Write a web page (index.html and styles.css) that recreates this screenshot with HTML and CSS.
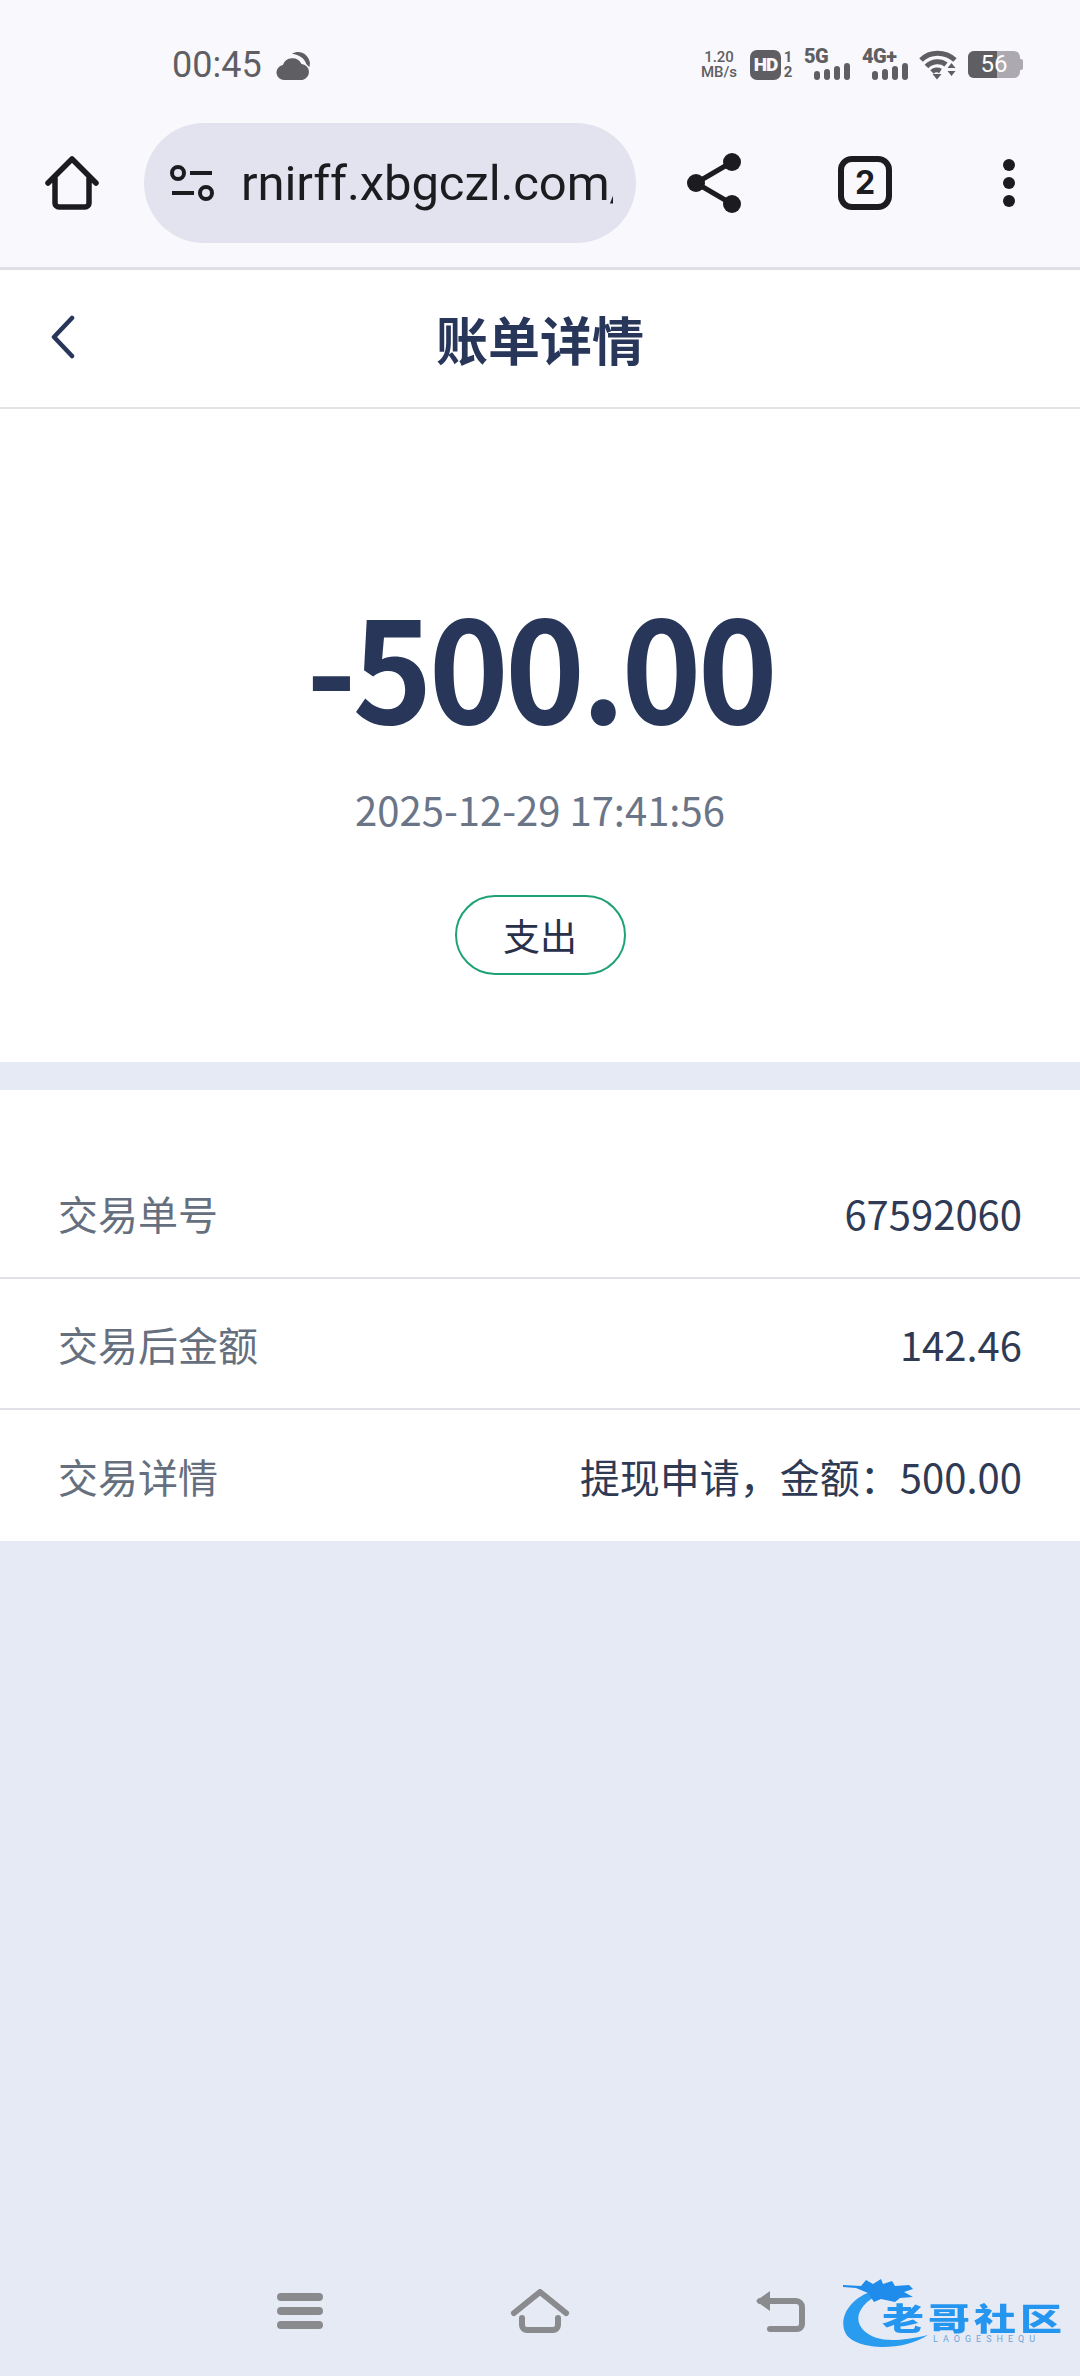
FILE: index.html
```html
<!DOCTYPE html>
<html lang="zh">
<head>
<meta charset="utf-8">
<title>账单详情</title>
<link rel="stylesheet" href="styles.css">
</head>
<body>
<div class="page">
  <div class="chrome">
    <div class="status">
      <div class="status-left">
        <span class="time">00:45</span>
        <svg class="cloud" viewBox="0 0 32 28" width="34" height="30"><path d="M8 28a7 7 0 0 1-1.600-13.900A9.500 9.500 0 0 1 24 13a7.600 7.600 0 0 1 1 15z" fill="#5f5f63"/><path d="M15 3.500C21-.5 30 2 32 12l-.6 4-2.900-3C27 8 22 4.500 15 3.500z" fill="#5f5f63"/></svg>
      </div>
      <div class="status-right">
        <div class="speed"><span>1.20</span><span>MB/s</span></div>
        <div class="hd"><span class="hd-box">HD</span><span class="hd-nums"><span>1</span><span>2</span></span></div>
        <div class="net net-5g"><span class="net-label">5G</span>
          <svg class="bars" viewBox="0 0 36 17" width="36" height="17"><rect x="0" y="8" width="6" height="9" rx="3"/><rect x="10" y="6" width="6" height="11" rx="3"/><rect x="20" y="3" width="6" height="14" rx="3"/><rect x="30" y="0" width="6" height="17" rx="3"/></svg>
        </div>
        <div class="net net-4g"><span class="net-label">4G+</span>
          <svg class="bars" viewBox="0 0 36 17" width="36" height="17"><rect x="0" y="8" width="6" height="9" rx="3"/><rect x="10" y="6" width="6" height="11" rx="3"/><rect x="20" y="3" width="6" height="14" rx="3"/><rect x="30" y="0" width="6" height="17" rx="3"/></svg>
        </div>
        <svg class="wifi" viewBox="0 0 38 30" width="38" height="30"><g fill="none" stroke="#5f5f63" stroke-width="5"><path d="M2 10C11 1 26 1 36 10"/><path d="M7.500 16.500C13 10.500 22 10.500 27 14.500"/><path d="M13 22C15.500 19.500 19 19.500 21.500 21"/></g><path d="M13.500 24h9l-4.500 5.500z" fill="#5f5f63"/><path d="M32.500 13l4 5h-8zM28.500 21h8l-4 5z" fill="#5f5f63"/></svg>
        <div class="battery"><div class="battery-level"></div><span class="battery-num">56</span><span class="battery-tip"></span></div>
      </div>
    </div>
    <div class="toolbar">
      <svg class="tb-home" viewBox="0 0 54 54" width="54" height="54"><path d="M3 27 27 3l24 24M10 22v25a4 4 0 0 0 4 4h26a4 4 0 0 0 4-4V22" fill="none" stroke="#1b1b20" stroke-width="5.500" stroke-linecap="round" stroke-linejoin="round"/></svg>
      <div class="url">
        <svg class="tune" viewBox="0 0 44 36" width="44" height="36"><g fill="none" stroke="#1b1b20" stroke-width="4"><circle cx="8" cy="8" r="6"/><circle cx="36" cy="28" r="6"/><path d="M20 8h22M2 28h22"/></g></svg>
        <div class="url-text">rnirff.xbgczl.com/</div>
      </div>
      <svg class="tb-share" viewBox="0 0 54 60" width="54" height="60"><path d="M45 9 9 30l36 21" fill="none" stroke="#1b1b20" stroke-width="5"/><circle cx="45" cy="9" r="9" fill="#1b1b20"/><circle cx="9" cy="30" r="9" fill="#1b1b20"/><circle cx="45" cy="51" r="9" fill="#1b1b20"/></svg>
      <div class="tabs">2</div>
      <svg class="tb-more" viewBox="0 0 12 48" width="12" height="48"><circle cx="6" cy="6" r="6" fill="#1b1b20"/><circle cx="6" cy="24" r="6" fill="#1b1b20"/><circle cx="6" cy="42" r="6" fill="#1b1b20"/></svg>
    </div>
  </div>

  <header class="head">
    <svg class="back" viewBox="0 0 26 44" width="26" height="44"><path d="M22 3 4 22l18 19" fill="none" stroke="#28365a" stroke-width="4.500" stroke-linecap="round" stroke-linejoin="round"/></svg>
    <h1 class="title">账单详情</h1>
  </header>

  <section class="summary">
    <div class="amount">-500.00</div>
    <div class="date">2025-12-29 17:41:56</div>
    <div class="tag">支出</div>
  </section>

  <section class="details">
    <div class="row"><span class="label">交易单号</span><span class="value">67592060</span></div>
    <div class="row"><span class="label">交易后金额</span><span class="value">142.46</span></div>
    <div class="row"><span class="label">交易详情</span><span class="value">提现申请，金额：500.00</span></div>
  </section>

  <main class="rest">
    <nav class="nav">
      <svg viewBox="0 0 46 36" width="46" height="36"><g stroke="#8a8b8f" stroke-width="8" stroke-linecap="round"><path d="M4 4h38M4 18h38M4 32h38"/></g></svg>
      <svg viewBox="0 0 60 44" width="60" height="44"><path d="M4 24 30 3l26 21M12 29v7a5 5 0 0 0 5 5h26a5 5 0 0 0 5-5v-7" fill="none" stroke="#8a8b8f" stroke-width="6" stroke-linecap="round" stroke-linejoin="round"/></svg>
      <svg viewBox="0 0 50 42" width="50" height="42"><path d="M4 11h36a6 6 0 0 1 6 6v17a5 5 0 0 1-5 5H14" fill="none" stroke="#8a8b8f" stroke-width="6" stroke-linecap="round"/><path d="M0 11 14 1v20z" fill="#8a8b8f"/></svg>
    </nav>
    <div class="logo">
      <svg class="logo-dragon" viewBox="0 0 230 74" width="230" height="74"><path d="M30 16C8 24 -2 44 6 58c8 14 52 20 82 1-24 6-42 6-51 3C24 58 12 46 22 32 26 26 32 22 38 20z" fill="#2a9cf0"/><path d="M3 9l18 1 5-6 7 4 8-5 2 5 9-3 3 5 14-1 4 4-9 3 9 5-13 1-5 4-14-3-7 3-6-9-12-5-13-1z" fill="#1f8cec"/></svg>
      <span class="logo-cn">老哥社区</span>
      <span class="logo-en">LAOGESHEQU</span>
    </div>
  </main>
</div>
</body>
</html>
```
FILE: styles.css
```css
* { box-sizing: border-box; }
html, body { margin: 0; padding: 0; }
body { font-family: "Noto Sans CJK SC", "Noto Sans", sans-serif; background: #e6eaf5; }
.page { width: 1080px; height: 2376px; display: flex; flex-direction: column; overflow: hidden; }

.chrome { background: #f8f8fd; height: 270px; border-bottom: 3px solid #dfdfe5; flex: none; }
.status { height: 123px; display: flex; justify-content: space-between; align-items: center; padding: 6px 60px 0 172px; color: #5f5f63; }
.status-left { display: flex; align-items: center; gap: 14px; }
.time { font-family: Roboto, sans-serif; font-size: 36px; line-height: 42px; color: #5f5f63; }
.cloud { flex: none; }
.status-right { display: flex; align-items: center; gap: 11px; }
.speed { width: 38px; display: flex; flex-direction: column; align-items: center; font-family: Roboto, sans-serif; font-size: 15px; line-height: 15px; font-weight: 500; white-space: nowrap; }
.hd { display: flex; align-items: center; gap: 2px; margin-left: 1px; }
.hd-box { width: 31px; height: 30px; border-radius: 7px; background: #5f5f63; color: #f8f8fd; font-family: Roboto, sans-serif; font-weight: 900; font-size: 19px; line-height: 30px; text-align: center; letter-spacing: -1px; }
.hd-nums { display: flex; flex-direction: column; align-items: center; font-family: Roboto, sans-serif; font-weight: 700; font-size: 15px; line-height: 15px; width: 10px; }
.net { position: relative; height: 30px; display: flex; justify-content: flex-end; align-items: flex-end; }
.net-5g { width: 46px; }
.net-4g { width: 46px; margin-left: 1px; }
.net-label { position: absolute; left: 0; top: -4px; font-family: Roboto, sans-serif; font-weight: 900; font-size: 20px; line-height: 20px; letter-spacing: -.5px; white-space: nowrap; }
.bars { fill: #5f5f63; }
.wifi { flex: none; }
.battery { position: relative; width: 52px; height: 27px; border-radius: 6px; background: #acaab0; overflow: visible; }
.battery-level { width: 29px; height: 27px; background: #5f5f63; border-radius: 6px 0 0 6px; }
.battery-num { position: absolute; inset: 0; text-align: center; color: #fff; font-family: Roboto, sans-serif; font-size: 24px; line-height: 27px; }
.battery-tip { position: absolute; right: -3px; top: 8px; width: 3px; height: 11px; background: #acaab0; border-radius: 0 2px 2px 0; }

.toolbar { display: flex; align-items: center; height: 144px; padding: 0 0 24px 45px; }
.tb-home { flex: none; margin-right: 45px; }
.url { flex: none; width: 492px; height: 120px; border-radius: 60px; background: #e2e3ee; display: flex; align-items: center; padding: 0 23px 0 26px; gap: 27px; overflow: hidden; }
.tune { flex: none; }
.url-text { flex: 1; min-width: 0; font-family: Roboto, sans-serif; font-size: 49px; letter-spacing: -.1px; color: #1b1b20; white-space: nowrap; overflow: hidden; }
.tb-share { flex: none; margin-left: 51px; }
.tabs { flex: none; margin-left: 97px; width: 54px; height: 54px; border: 6px solid #1b1b20; border-radius: 14px; font-family: Inter, sans-serif; font-weight: 700; font-size: 32px; line-height: 42px; text-align: center; color: #1b1b20; }
.tb-more { flex: none; margin-left: 111px; }

.head { flex: none; height: 139px; background: #fff; border-bottom: 2px solid #e3e3e6; position: relative; display: flex; align-items: center; justify-content: center; }
.back { position: absolute; left: 50px; top: 45px; }
.title { margin: 0; font-size: 52px; line-height: 70px; font-weight: 700; color: #28365a; }

.summary { flex: none; height: 653px; background: #fff; display: flex; flex-direction: column; align-items: center; padding-top: 179px; }
.amount { font-size: 140px; line-height: 150px; font-weight: 700; letter-spacing: -4px; color: #28365a; transform: scaleX(.97); white-space: nowrap; }
.date { margin-top: 42px; font-size: 40px; line-height: 58px; color: #6b7588; }
.tag { margin-top: 57px; width: 171px; height: 80px; border: 2px solid #1fa176; border-radius: 40px; text-align: center; font-size: 37px; line-height: 76px; color: #28304a; }

.details { flex: none; margin-top: 28px; padding-top: 58px; background: #fff; }
.row { height: 131px; padding: 0 58px; display: flex; justify-content: space-between; align-items: center; font-size: 40px; border-bottom: 2px solid #dfe1e6; margin-top: 0; }
.row:last-child { border-bottom: none; }
.label { color: #656f7e; }
.value { color: #2f3a55; }

.rest { flex: 1; position: relative; display: flex; flex-direction: column; justify-content: flex-end; }
.nav { display: flex; justify-content: space-between; align-items: center; height: 92px; padding: 0 274px 38px 277px; }

.logo { position: absolute; left: 840px; bottom: 26px; width: 230px; height: 74px; color: #2f9df2; }
.logo-dragon { position: absolute; left: 0; top: 0; filter: blur(.7px); }
.logo-cn { position: absolute; left: 42px; top: 25px; font-size: 42px; line-height: 32px; font-weight: 900; white-space: nowrap; letter-spacing: 4px; color: #2596ef; transform: scaleY(.72); filter: blur(.5px); }
.logo-en { position: absolute; left: 93px; top: 58px; font-family: Roboto, sans-serif; font-size: 9px; line-height: 11px; letter-spacing: 5px; color: #6ea6d8; white-space: nowrap; }
```
